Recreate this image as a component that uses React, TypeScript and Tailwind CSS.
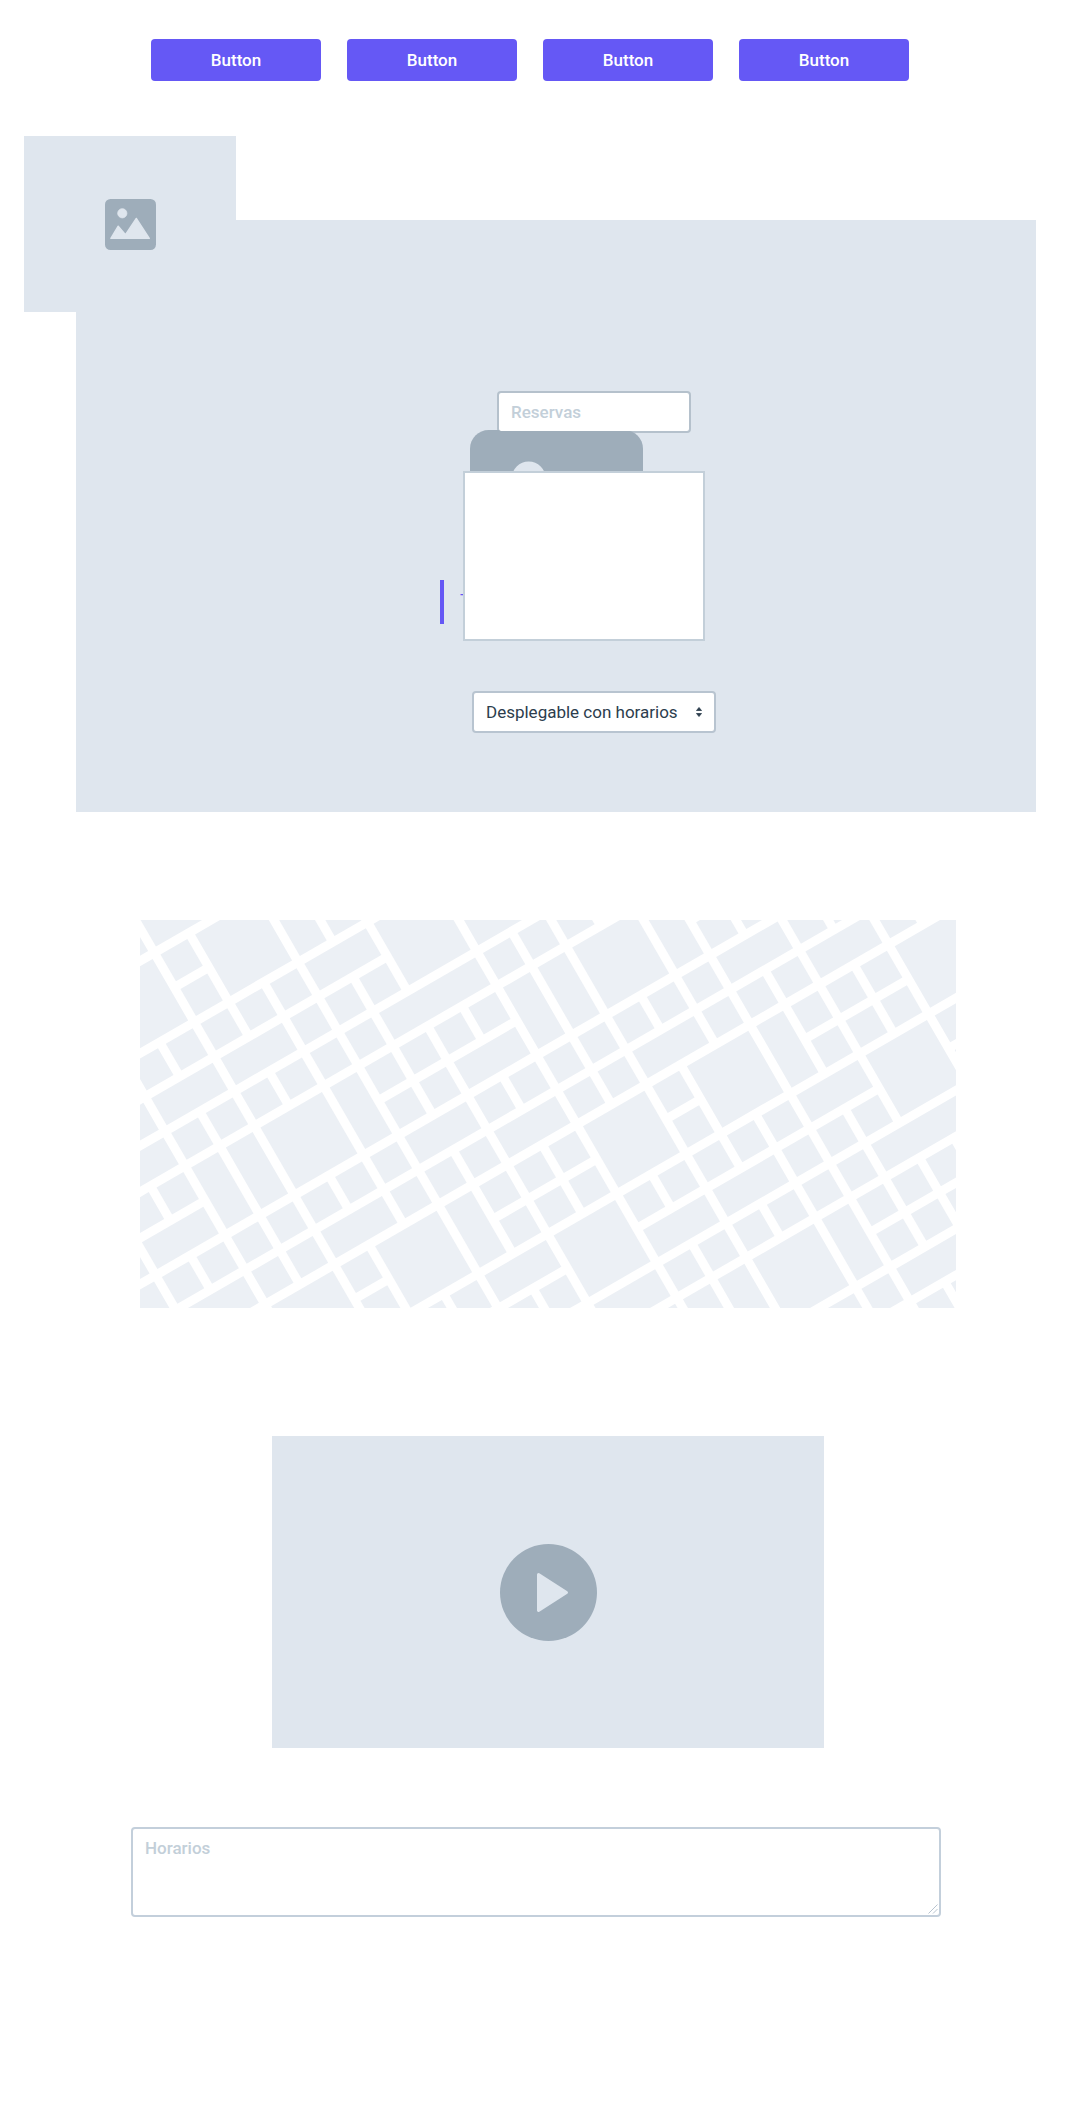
import React from "react";

type Block = [col: number, row: number, width: number, height: number];

const CELL = 40;
const ROAD = 9;

/* City blocks that span more than one cell of the street grid. */
const LARGE_BLOCKS: Block[] = [
  [0, 0, 2, 1], [1, 1, 2, 2], [-2, 1, 2, 2], [3, 1, 1, 2],
  [3, 3, 2, 1], [5, 3, 2, 2], [0, 4, 2, 1], [-2, 4, 2, 1],
  [7, 4, 2, 1], [4, 5, 3, 1], [-4, 5, 2, 1], [7, 6, 1, 2],
  [8, 6, 1, 2], [9, 6, 2, 2], [11, 6, 1, 2], [0, 6, 2, 2],
  [2, 6, 1, 2], [-1, 6, 1, 2], [-2, 6, 1, 2], [5, 7, 2, 1],
  [-4, 7, 2, 1], [12, 8, 2, 1], [3, 8, 2, 1], [9, 9, 2, 1],
  [14, 9, 2, 1], [0, 9, 2, 1], [-4, 9, 2, 1], [5, 9, 2, 1],
  [10, 10, 2, 2], [12, 10, 1, 2], [16, 10, 2, 2], [1, 10, 2, 2],
  [-2, 10, 2, 2], [3, 10, 1, 2], [7, 10, 2, 2], [12, 12, 2, 1],
  [14, 12, 2, 2], [3, 12, 2, 1], [5, 12, 2, 2], [7, 13, 2, 1],
  [9, 13, 2, 1], [5, 14, 2, 1], [13, 14, 3, 1], [8, 15, 1, 2],
  [9, 15, 2, 2], [11, 15, 1, 2], [12, 17, 2, 1],
];

function buildBlocks(): Block[] {
  const taken = new Set<string>();
  LARGE_BLOCKS.forEach(([c, r, w, h]) => {
    for (let i = c; i < c + w; i++) for (let j = r; j < r + h; j++) taken.add(`${i},${j}`);
  });
  const blocks = [...LARGE_BLOCKS];
  for (let i = -7; i < 20; i++) {
    for (let j = -1; j < 20; j++) {
      if (!taken.has(`${i},${j}`)) blocks.push([i, j, 1, 1]);
    }
  }
  return blocks;
}

const BLOCKS = buildBlocks();

function StreetMap() {
  return (
    <svg viewBox="0 0 816 388" className="block w-full" role="img" aria-label="Map">
      <g transform="translate(-5.7 -1.9) rotate(-30)" fill="#ecf0f5">
        {BLOCKS.map(([c, r, w, h]) => (
          <rect
            key={`${c},${r}`}
            x={c * CELL + ROAD / 2}
            y={r * CELL + ROAD / 2}
            width={w * CELL - ROAD}
            height={h * CELL - ROAD}
          />
        ))}
      </g>
    </svg>
  );
}

function PictureIcon({ className }: { className: string }) {
  return (
    <svg viewBox="0 0 51 51" className={className} aria-hidden="true">
      <rect width="51" height="51" rx="5.5" fill="#9eadba" />
      <g fill="#dfe6ee" stroke="#dfe6ee" strokeLinejoin="round">
        <circle cx="17.3" cy="14.3" r="4.6" strokeWidth="0.8" />
        <path d="M5.9 39.4 13.2 27.2 20.5 35.6 31.3 19.4 44.3 39.4Z" strokeWidth="1.4" />
      </g>
    </svg>
  );
}

export default function App() {
  return (
    <main className="min-h-screen bg-white pb-[199px] font-['Roboto',sans-serif] text-[17px] leading-6">
      <div className="grid grid-cols-4 gap-[26px] pt-[39px] pr-[171px] pl-[151px]">
        {[1, 2, 3, 4].map((n) => (
          <button key={n} type="button" className="h-[42px] rounded bg-[#6558f5] font-medium text-white">
            Button
          </button>
        ))}
      </div>

      <section className="relative mt-[139px] mr-[44px] ml-[76px] flex h-[592px] justify-center bg-[#dfe6ee] pl-[44px]">
        <div className="absolute -top-[84px] -left-[52px] flex h-[176px] w-[212px] items-center justify-center bg-[#dfe6ee]">
          <PictureIcon className="size-[51px]" />
        </div>
        <div className="absolute inset-0 flex items-center justify-center">
          <PictureIcon className="size-[173px]" />
        </div>

        <div className="relative w-[276px] pt-[171px]">
          <input
            type="text"
            aria-label="Reservas"
            placeholder="Reservas"
            className="ml-[57px] block h-[42px] w-[194px] rounded border-2 border-[#9eadba]/65 bg-white bg-clip-padding px-3 font-medium placeholder:text-[#c3cfd9] placeholder:opacity-100"
          />
          <a
            href="#tab"
            className="absolute top-[360px] left-0 h-11 border-l-4 border-[#6558f5] pt-2 pl-4 text-[#6558f5]"
          >
            T
          </a>
          <div className="relative mt-[38px] ml-[23px] h-[170px] w-[242px] border-2 border-[#c3cfd9] bg-white" />
          <div className="relative mt-[50px] ml-8 h-[42px] w-[244px]">
            <select
              aria-label="Horarios disponibles"
              className="size-full appearance-none rounded border-2 border-[#b8c4d0] bg-white pr-6 pl-3 text-[#2c3d4d]"
            >
              <option>Desplegable con horarios</option>
            </select>
            <svg
              viewBox="0 0 6 10"
              className="pointer-events-none absolute top-4 right-[14px] h-[10px] w-[6px]"
              fill="#2c3d4d"
              stroke="#2c3d4d"
              strokeLinejoin="round"
              strokeWidth="0.8"
              aria-hidden="true"
            >
              <path d="M3 .5 5.5 3.5H.5Z" />
              <path d="M3 9.5 5.5 6.5H.5Z" />
            </svg>
          </div>
        </div>
      </section>

      <section className="mt-[108px] mr-[124px] ml-[140px]">
        <StreetMap />
      </section>

      <section className="mt-32 mr-[256px] ml-[272px] flex h-[312px] items-center justify-center bg-[#dfe6ee]">
        <button type="button" aria-label="Play video" className="size-[97px]">
          <svg viewBox="0 0 97 97" className="size-full" aria-hidden="true">
            <circle cx="48.5" cy="48.5" r="48.5" fill="#9eadba" />
            <path
              d="M38.5 30.5 66.5 48.5 38.5 66.5Z"
              fill="#dfe6ee"
              stroke="#dfe6ee"
              strokeWidth="3"
              strokeLinejoin="round"
            />
          </svg>
        </button>
      </section>

      <section className="relative mt-[79px] mr-[139px] ml-[131px]">
        <textarea
          aria-label="Horarios"
          placeholder="Horarios"
          className="block h-[90px] w-full resize-none rounded border-2 border-[#c3cfdb] bg-white px-3 py-[7px] font-medium placeholder:text-[#c3cfd9] placeholder:opacity-100"
        />
        <svg
          viewBox="0 0 10 10"
          className="pointer-events-none absolute right-[3px] bottom-[3px] size-[10px]"
          stroke="#b8c4d0"
          fill="none"
          aria-hidden="true"
        >
          <path d="M.5 9.5 9.5 .5M5 9.5 9.5 5" />
        </svg>
      </section>
    </main>
  );
}
